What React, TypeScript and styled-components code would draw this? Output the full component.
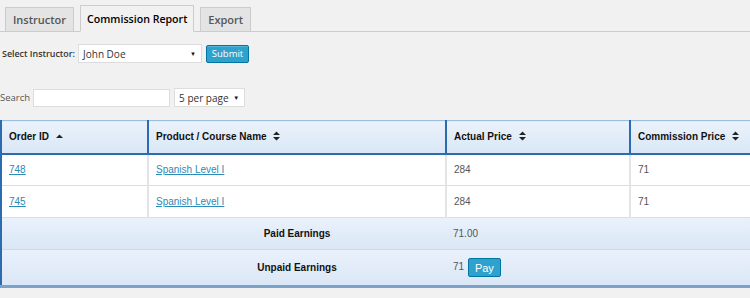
import React from "react";
import styled, { createGlobalStyle } from "styled-components";

const GlobalStyle = createGlobalStyle`
  html, body {
    margin: 0;
    padding: 0;
    background: #f1f1f1;
    overflow: hidden;
  }
  body {
    font-family: "Open Sans", "Liberation Sans", sans-serif;
    color: #444;
  }
`;

const rows = [
  { id: "748", name: "Spanish Level I", price: "284", commission: "71" },
  { id: "745", name: "Spanish Level I", price: "284", commission: "71" },
];

const App: React.FC = () => {
  return (
    <>
      <GlobalStyle />
      <Page>
        <Tabs>
          <Tab>Instructor</Tab>
          <Tab active>Commission Report</Tab>
          <Tab>Export</Tab>
        </Tabs>

        <FilterRow>
          <Label>Select Instructor:</Label>
          <Select width={124}>
            <span>John Doe</span>
            <Caret>▼</Caret>
          </Select>
          <Button>Submit</Button>
        </FilterRow>

        <SearchRow>
          <SearchLabel>Search</SearchLabel>
          <Input />
          <Select width={71}>
            <span>5 per page</span>
            <Caret>▼</Caret>
          </Select>
        </SearchRow>

        <Table>
          <colgroup>
            <col style={{ width: 147 }} />
            <col style={{ width: 298 }} />
            <col style={{ width: 184 }} />
            <col style={{ width: 141 }} />
          </colgroup>
          <thead>
            <tr>
              <Th>
                Order ID <SortUp />
              </Th>
              <Th>
                Product / Course Name <SortBoth />
              </Th>
              <Th>
                Actual Price <SortBoth />
              </Th>
              <Th>
                Commission Price <SortBoth />
              </Th>
            </tr>
          </thead>
          <tbody>
            {rows.map((r) => (
              <tr key={r.id}>
                <Td>
                  <Link href="#">{r.id}</Link>
                </Td>
                <Td>
                  <Link href="#">{r.name}</Link>
                </Td>
                <Td>{r.price}</Td>
                <Td>{r.commission}</Td>
              </tr>
            ))}
          </tbody>
          <tfoot>
            <FootRow>
              <FootCell />
              <FootLabel>Paid Earnings</FootLabel>
              <FootCell>71.00</FootCell>
              <FootCell />
            </FootRow>
            <FootRow last>
              <FootCell />
              <FootLabel>Unpaid Earnings</FootLabel>
              <FootCell>
                71 <PayButton>Pay</PayButton>
              </FootCell>
              <FootCell />
            </FootRow>
          </tfoot>
        </Table>
      </Page>
    </>
  );
};

const SortUp = () => (
  <SortIcon width="7" height="9" viewBox="0 0 7 9">
    <path d="M0 6 L3.5 2.5 L7 6 Z" fill="#222" />
  </SortIcon>
);

const SortBoth = () => (
  <SortIcon width="7" height="10" viewBox="0 0 7 10">
    <path d="M0 4 L3.5 0.5 L7 4 Z M0 6 L3.5 9.5 L7 6 Z" fill="#222" />
  </SortIcon>
);

const Page = styled.div`
  width: 750px;
  height: 298px;
  overflow: hidden;
`;

const Tabs = styled.div`
  display: flex;
  align-items: flex-end;
  gap: 6px;
  height: 31px;
  padding-left: 5px;
  border-bottom: 1px solid #ccc;
`;

const Tab = styled.div<{ active?: boolean }>`
  box-sizing: border-box;
  height: ${(p) => (p.active ? "27px" : "24px")};
  margin-bottom: ${(p) => (p.active ? "-1px" : "0")};
  padding: 0 ${(p) => (p.active ? "6px" : "7px")};
  display: flex;
  align-items: center;
  font-size: ${(p) => (p.active ? "10.6px" : "11px")};
  font-weight: 600;
  color: ${(p) => (p.active ? "#000" : "#555")};
  background: ${(p) => (p.active ? "#f1f1f1" : "#e4e4e4")};
  border: 1px solid #ccc;
  border-bottom: ${(p) => (p.active ? "1px solid #f1f1f1" : "none")};
`;

const FilterRow = styled.div`
  display: flex;
  align-items: center;
  gap: 3px;
  margin-top: 12px;
  padding-left: 2px;
  height: 19px;
`;

const Label = styled.span`
  font-size: 8.9px;
  font-weight: 600;
  color: #333;
`;

const Select = styled.div<{ width: number }>`
  box-sizing: border-box;
  width: ${(p) => p.width}px;
  height: 19px;
  background: #fff;
  border: 1px solid #ddd;
  display: flex;
  align-items: center;
  justify-content: space-between;
  padding: 0 5px 0 4px;
  font-size: 10px;
  color: #333;
  white-space: nowrap;
`;

const Caret = styled.span`
  font-size: 6px;
  color: #111;
`;

const Button = styled.button`
  box-sizing: border-box;
  width: 43px;
  height: 18px;
  padding: 0;
  margin-left: 1px;
  background: #2ea2cc;
  border: 1px solid #0074a2;
  border-radius: 2px;
  color: #fff;
  font-family: "Open Sans", "Liberation Sans", sans-serif;
  font-size: 9.5px;
  box-shadow: inset 0 1px 0 rgba(120, 200, 230, 0.5);
`;

const SearchRow = styled.div`
  display: flex;
  align-items: center;
  margin-top: 25px;
  height: 19px;
`;

const SearchLabel = styled.span`
  font-size: 9.5px;
  color: #555;
  margin-right: 3px;
`;

const Input = styled.div`
  box-sizing: border-box;
  width: 137px;
  height: 18px;
  background: #fff;
  border: 1px solid #ddd;
  margin-right: 4px;
`;

const Table = styled.table`
  margin-top: 13px;
  width: 770px;
  table-layout: fixed;
  border-collapse: collapse;
  font-family: "Liberation Sans", Arial, sans-serif;
  font-size: 10px;
  border-left: 2px solid #2b6cb0;
  border-bottom: 3px solid #7ba3c8;
`;

const Th = styled.th`
  height: 33px;
  box-sizing: border-box;
  padding: 0 7px;
  text-align: left;
  font-weight: bold;
  color: #111;
  background: linear-gradient(#eaf2fb, #d9e7f6);
  border-top: 1px solid #9ebedf;
  border-bottom: 2px solid #2b6cb0;
  border-left: 2px solid #2b6cb0;
  white-space: nowrap;
`;

const SortIcon = styled.svg`
  margin-left: 4px;
  vertical-align: -1px;
`;

const Td = styled.td`
  height: 32px;
  box-sizing: border-box;
  padding: 0 7px;
  background: #fff;
  color: #555;
  border-left: 2px solid #e4e4e4;
  border-bottom: 1px solid #ddd;
  &:first-child {
    border-left: none;
  }
`;

const Link = styled.a`
  color: #2a8bb6;
  text-decoration: underline;
`;

const FootRow = styled.tr<{ last?: boolean }>`
  height: ${(p) => (p.last ? "37px" : "32px")};
  background: linear-gradient(#e9f1fb, #dbe7f6);
  border-bottom: ${(p) => (p.last ? "1px solid #fff" : "1px solid #cfd9e6")};
`;

const FootCell = styled.td`
  padding: 0 7px;
  color: #555;
  white-space: nowrap;
`;

const FootLabel = styled.th`
  text-align: center;
  font-weight: bold;
  color: #111;
`;

const PayButton = styled.button`
  box-sizing: border-box;
  height: 19px;
  padding: 0 6px;
  margin-left: 1px;
  background: #2ea2cc;
  border: 1px solid #0074a2;
  border-radius: 2px;
  color: #fff;
  font-family: "Liberation Sans", Arial, sans-serif;
  font-size: 11px;
  vertical-align: middle;
`;

export default App;
